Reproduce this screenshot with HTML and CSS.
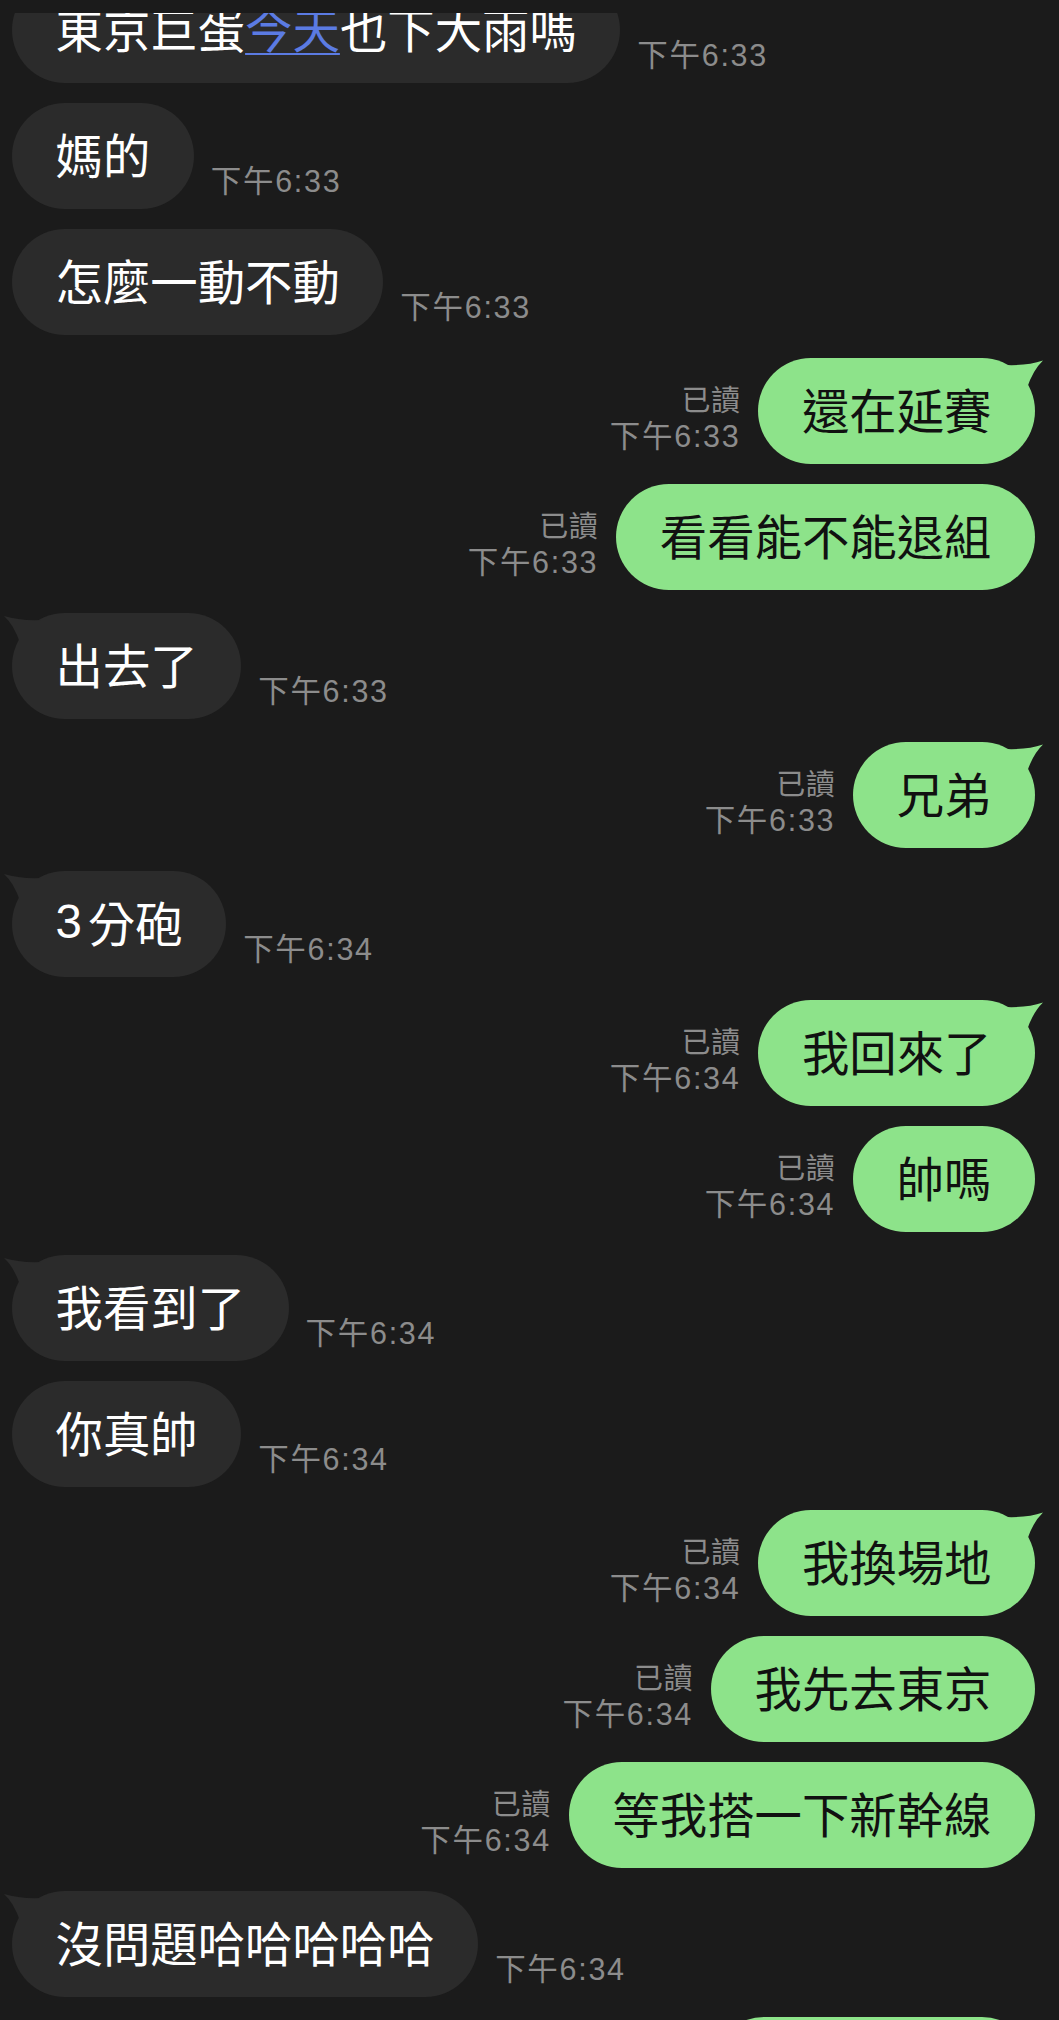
FILE: index.html
```html
<!DOCTYPE html>
<html lang="zh-Hant">
<head>
<meta charset="utf-8">
<title>Chat</title>
<link rel="stylesheet" href="styles.css">
</head>
<body>
<div class="top-cut"></div>
<main class="chat">
  <div class="row recv first">
    <div class="bubble">東京巨蛋<span class="link">今天</span>也下大雨嗎</div>
    <div class="meta"><span class="time">下午6:33</span></div>
  </div>
  <div class="row recv">
    <div class="bubble">媽的</div>
    <div class="meta"><span class="time">下午6:33</span></div>
  </div>
  <div class="row recv">
    <div class="bubble">怎麼一動不動</div>
    <div class="meta"><span class="time">下午6:33</span></div>
  </div>
  <div class="row sent tail">
    <div class="meta"><span class="read">已讀</span><span class="time">下午6:33</span></div>
    <div class="bubble">還在延賽<svg class="tail-svg" viewBox="-32 0 42 32"><path d="M-30 7 Q-8 8 8 2.5 Q-2 12 -8 30 L-30 30 Z"/></svg></div>
  </div>
  <div class="row sent">
    <div class="meta"><span class="read">已讀</span><span class="time">下午6:33</span></div>
    <div class="bubble">看看能不能退組</div>
  </div>
  <div class="row recv tail">
    <div class="bubble">出去了<svg class="tail-svg" viewBox="-10 0 42 32"><path d="M30 7 Q8 8 -8 3 Q2 12 8 30 L30 30 Z"/></svg></div>
    <div class="meta"><span class="time">下午6:33</span></div>
  </div>
  <div class="row sent tail">
    <div class="meta"><span class="read">已讀</span><span class="time">下午6:33</span></div>
    <div class="bubble">兄弟<svg class="tail-svg" viewBox="-32 0 42 32"><path d="M-30 7 Q-8 8 8 2.5 Q-2 12 -8 30 L-30 30 Z"/></svg></div>
  </div>
  <div class="row recv tail">
    <div class="bubble"><span class="num">3</span>分砲<svg class="tail-svg" viewBox="-10 0 42 32"><path d="M30 7 Q8 8 -8 3 Q2 12 8 30 L30 30 Z"/></svg></div>
    <div class="meta"><span class="time">下午6:34</span></div>
  </div>
  <div class="row sent tail">
    <div class="meta"><span class="read">已讀</span><span class="time">下午6:34</span></div>
    <div class="bubble">我回來了<svg class="tail-svg" viewBox="-32 0 42 32"><path d="M-30 7 Q-8 8 8 2.5 Q-2 12 -8 30 L-30 30 Z"/></svg></div>
  </div>
  <div class="row sent">
    <div class="meta"><span class="read">已讀</span><span class="time">下午6:34</span></div>
    <div class="bubble">帥嗎</div>
  </div>
  <div class="row recv tail">
    <div class="bubble">我看到了<svg class="tail-svg" viewBox="-10 0 42 32"><path d="M30 7 Q8 8 -8 3 Q2 12 8 30 L30 30 Z"/></svg></div>
    <div class="meta"><span class="time">下午6:34</span></div>
  </div>
  <div class="row recv">
    <div class="bubble">你真帥</div>
    <div class="meta"><span class="time">下午6:34</span></div>
  </div>
  <div class="row sent tail">
    <div class="meta"><span class="read">已讀</span><span class="time">下午6:34</span></div>
    <div class="bubble">我換場地<svg class="tail-svg" viewBox="-32 0 42 32"><path d="M-30 7 Q-8 8 8 2.5 Q-2 12 -8 30 L-30 30 Z"/></svg></div>
  </div>
  <div class="row sent">
    <div class="meta"><span class="read">已讀</span><span class="time">下午6:34</span></div>
    <div class="bubble">我先去東京</div>
  </div>
  <div class="row sent">
    <div class="meta"><span class="read">已讀</span><span class="time">下午6:34</span></div>
    <div class="bubble">等我搭一下新幹線</div>
  </div>
  <div class="row recv tail">
    <div class="bubble">沒問題哈哈哈哈哈<svg class="tail-svg" viewBox="-10 0 42 32"><path d="M30 7 Q8 8 -8 3 Q2 12 8 30 L30 30 Z"/></svg></div>
    <div class="meta"><span class="time">下午6:34</span></div>
  </div>
  <div class="row sent last">
    <div class="meta"><span class="read">已讀</span><span class="time">下午6:34</span></div>
    <div class="bubble">我到東京了</div>
  </div>
</main>
</body>
</html>
```

FILE: styles.css
```css
* { box-sizing: border-box; }

html, body {
  margin: 0;
  padding: 0;
  background: #1b1b1b;
}

body {
  font-family: "Noto Sans CJK TC", "Noto Sans CJK SC", sans-serif;
  overflow: hidden;
  height: 2020px;
  position: relative;
}

.top-cut {
  position: absolute;
  top: 0;
  left: 0;
  right: 0;
  height: 13px;
  background: #1b1b1b;
  z-index: 5;
}

.chat {
  display: flex;
  flex-direction: column;
  margin-top: -23px;
}

.row {
  display: flex;
  align-items: flex-end;
  margin-top: 20px;
}

.row.first { margin-top: 0; }
.row.tail { margin-top: 23px; }

.row.recv {
  justify-content: flex-start;
  padding-left: 12px;
  gap: 17px;
}

.row.sent {
  justify-content: flex-end;
  padding-right: 24px;
  gap: 18px;
}

.bubble {
  position: relative;
  height: 106px;
  border-radius: 53px;
  padding: 0 43.5px 4px;
  display: flex;
  align-items: center;
  font-size: 47.4px;
  line-height: 1;
  white-space: nowrap;
}

.recv .bubble {
  background: #2b2b2b;
  color: #ffffff;
}

.sent .bubble {
  background: #8de38a;
  color: #111111;
}

.link {
  color: #5b7be3;
  text-decoration: underline;
  text-decoration-thickness: 2px;
  text-underline-offset: 5px;
}

.num {
  font-family: "Liberation Sans", sans-serif;
  margin-right: 6px;
}

.tail-svg {
  position: absolute;
  top: 0;
  width: 42px;
  height: 32px;
  overflow: visible;
}

.sent .tail-svg { right: -10px; fill: #8de38a; }
.recv .tail-svg { left: -10px; fill: #2b2b2b; }

.meta {
  display: flex;
  flex-direction: column;
  font-family: "Liberation Sans", "Noto Sans CJK TC", sans-serif;
  font-size: 30.5px;
  line-height: 35px;
  color: #8c8c8c;
  padding-bottom: 10px;
  white-space: nowrap;
}

.sent .meta { align-items: flex-end; }

.read {
  font-size: 29px;
  letter-spacing: 0.5px;
}

.time {
  letter-spacing: 1.7px;
}
```
